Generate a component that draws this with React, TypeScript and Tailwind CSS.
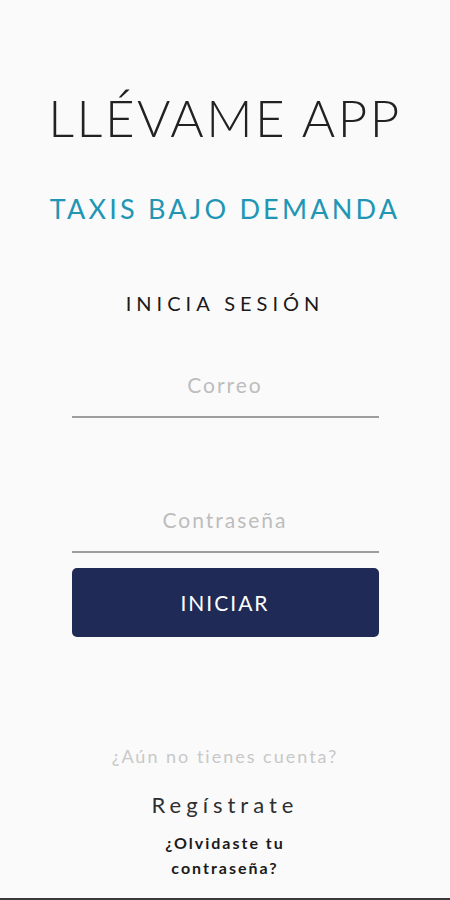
export default function App() {
  return (
    <div className="flex h-[900px] w-full flex-col items-center border-b-2 border-[#3a3a3a] bg-[#fafafa] font-['Lato',sans-serif]">
      <h1 className="mt-[90px] text-[51px] font-light leading-[56px] tracking-[2.5px] text-[#222]">
        LLÉVAME APP
      </h1>
      <h2 className="mt-[46px] text-[27px] leading-[34px] tracking-[3.2px] text-[#2196b4]">
        TAXIS BAJO DEMANDA
      </h2>
      <h3 className="mt-[64px] text-[20px] leading-[26px] tracking-[5px] text-[#1a1a1a]">
        INICIA SESIÓN
      </h3>

      <div className="mt-[44px] w-[307px]">
        <input
          placeholder="Correo"
          className="h-[58px] w-full border-b-2 border-[#9e9e9e] bg-transparent pb-[8px] text-center text-[21px] tracking-[2px] text-[#333] outline-none placeholder:text-[#bdbdbd]"
        />
        <input
          type="password"
          placeholder="Contraseña"
          className="mt-[77px] h-[58px] w-full border-b-2 border-[#9e9e9e] bg-transparent pb-[8px] text-center text-[21px] tracking-[2px] text-[#333] outline-none placeholder:text-[#bdbdbd]"
        />
        <button
          type="button"
          className="mt-[15px] h-[69px] w-full rounded-[5px] bg-[#1f2a56] text-[21px] tracking-[2px] text-white"
        >
          INICIAR
        </button>
      </div>

      <p className="mt-[108px] text-[18px] leading-[22px] tracking-[2px] text-[#c8c8c8]">
        ¿Aún no tienes cuenta?
      </p>
      <button type="button" className="mt-[25px] text-[22px] leading-[26px] tracking-[5px] text-[#2f2f2f]">
        Regístrate
      </button>
      <button
        type="button"
        className="mt-[12px] w-[170px] text-center text-[16px] font-bold leading-[25px] tracking-[2px] text-[#1a1a1a]"
      >
        ¿Olvidaste tu contraseña?
      </button>
    </div>
  )
}
